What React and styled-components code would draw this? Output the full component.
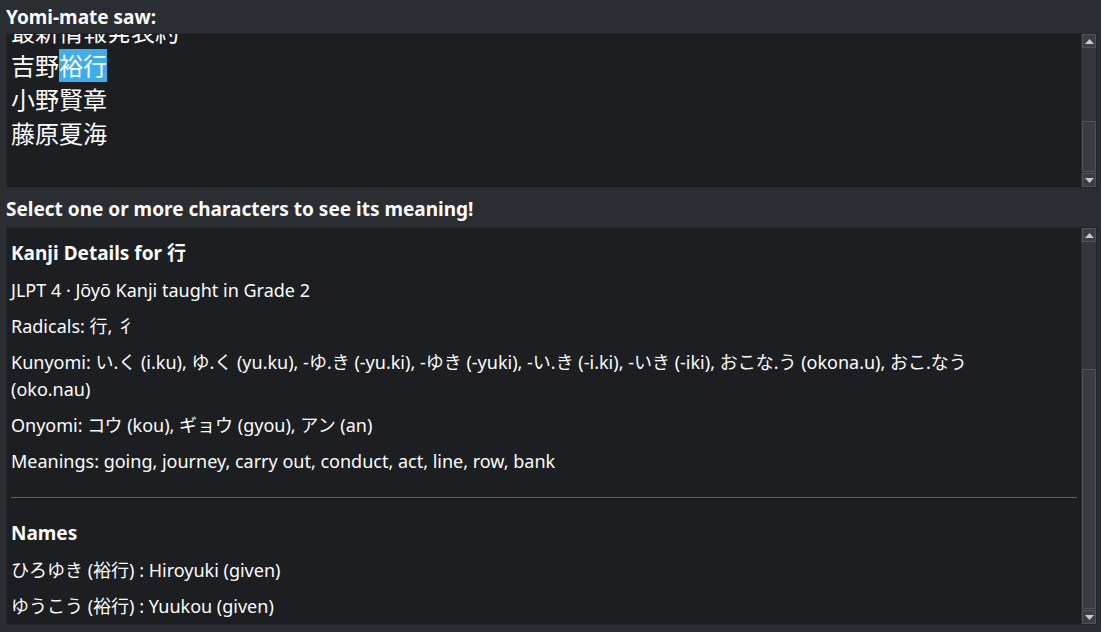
import React from 'react';
import styled, {createGlobalStyle} from 'styled-components';

const GlobalStyle = createGlobalStyle`
  html, body {
    margin: 0;
    padding: 0;
    background: #2a2d31;
  }
  body {
    font-family: "Noto Sans", "Noto Sans CJK JP", sans-serif;
    color: #fcfcfc;
  }
`;

const Window = styled.div`
  width: 1101px;
  height: 632px;
  display: flex;
  flex-direction: column;
  padding: 0 4px 7px 6px;
  box-sizing: border-box;
  background: #2a2d31;
`;

const Label = styled.div`
  height: ${props => props.height}px;
  display: flex;
  align-items: center;
  font-weight: 700;
  font-size: 19px;
  padding-top: ${props => props.offset || 0}px;
  box-sizing: border-box;
  white-space: nowrap;
`;

const TextBox = styled.div`
  height: ${props => props.height}px;
  flex: ${props => props.grow ? 1 : 'none'};
  display: flex;
  background: #1c1e21;
  border: 1px solid #232629;
  box-sizing: border-box;
  min-height: 0;
`;

const Viewport = styled.div`
  flex: 1;
  overflow: hidden;
  padding: 0 4px;
`;

const SourceText = styled.div`
  margin-top: -19px;
  font-size: 24px;
  line-height: 34px;
`;

const Highlight = styled.span`
  background: #3daee9;
  color: #ffffff;
`;

const ScrollBar = styled.div`
  width: 14px;
  display: flex;
  flex-direction: column;
  background: #33363a;
  border-left: 1px solid #2c2f33;
`;

const ScrollButton = styled.div`
  height: 14px;
  display: flex;
  align-items: center;
  justify-content: center;
  background: #3b3e42;
  border: 1px solid #505357;
  box-sizing: border-box;
`;

const Track = styled.div`
  flex: 1;
  display: flex;
  flex-direction: column;
  justify-content: flex-end;
  padding: 1px 0;
`;

const Thumb = styled.div`
  height: ${props => props.size}px;
  background: #393c40;
  border: 1px solid #505357;
  box-sizing: border-box;
`;

const Details = styled.div`
  padding-top: 12px;
  font-size: 18px;
  line-height: 27px;
`;

const Heading = styled.div`
  font-weight: 700;
  font-size: 19px;
  margin-bottom: 10px;
`;

const Para = styled.div`
  margin-bottom: 9px;
`;

const Rule = styled.hr`
  border: none;
  border-top: 1px solid #5d6167;
  margin: 22px 0 22px;
`;

const Arrow = ({up}) => (
    <svg width="9" height="5" viewBox="0 0 9 5">
        <path d={up ? 'M0 5 L4.5 0 L9 5 Z' : 'M0 0 L4.5 5 L9 0 Z'} fill="#c8cacc"/>
    </svg>
);

const Scroller = ({thumb}) => (
    <ScrollBar>
        <ScrollButton><Arrow up/></ScrollButton>
        <Track>
            <Thumb size={thumb}/>
        </Track>
        <ScrollButton><Arrow/></ScrollButton>
    </ScrollBar>
);

const App = () => (
    <Window>
        <GlobalStyle/>
        <Label height={33}>Yomi-mate saw:</Label>
        <TextBox height={155}>
            <Viewport>
                <SourceText>
                    <div>最新情報発表約</div>
                    <div>吉野<Highlight>裕行</Highlight></div>
                    <div>小野賢章</div>
                    <div>藤原夏海</div>
                </SourceText>
            </Viewport>
            <Scroller thumb={51}/>
        </TextBox>
        <Label height={39} offset={3}>Select one or more characters to see its meaning!</Label>
        <TextBox grow>
            <Viewport>
                <Details>
                    <Heading>Kanji Details for 行</Heading>
                    <Para>JLPT 4 · Jōyō Kanji taught in Grade 2</Para>
                    <Para>Radicals: 行, 彳</Para>
                    <Para>
                        Kunyomi: い.く (i.ku), ゆ.く (yu.ku), -ゆ.き (-yu.ki), -ゆき (-yuki), -い.き (-i.ki), -いき (-iki), おこな.う (okona.u), おこ.なう
                        <br/>(oko.nau)
                    </Para>
                    <Para>Onyomi: コウ (kou), ギョウ (gyou), アン (an)</Para>
                    <Para>Meanings: going, journey, carry out, conduct, act, line, row, bank</Para>
                    <Rule/>
                    <Heading>Names</Heading>
                    <Para>ひろゆき (裕行) : Hiroyuki (given)</Para>
                    <Para>ゆうこう (裕行) : Yuukou (given)</Para>
                </Details>
            </Viewport>
            <Scroller thumb={240}/>
        </TextBox>
    </Window>
);

export default App;
